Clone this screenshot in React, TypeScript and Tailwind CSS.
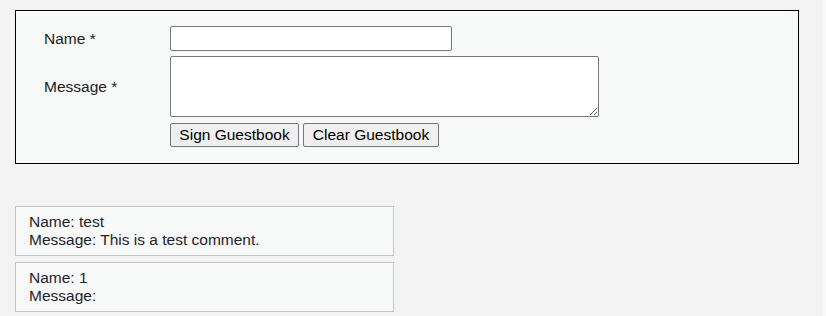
import React, { useState } from 'react';

type Entry = { name: string; message: string };

const initialEntries: Entry[] = [
  { name: 'test', message: 'This is a test comment.' },
  { name: '1', message: '' },
];

const App: React.FC = () => {
  const [name, setName] = useState('');
  const [message, setMessage] = useState('');
  const [entries, setEntries] = useState<Entry[]>(initialEntries);

  const sign = () => {
    if (!name || !message) return;
    setEntries([...entries, { name, message }]);
    setName('');
    setMessage('');
  };

  return (
    <div className="flex min-h-[316px] w-[826px] bg-[#f3f3f3] font-['Liberation_Sans',Arial,sans-serif] text-[15.5px] text-[#1f2328]">
      <div className="flex-1 pl-[15px] pt-[10px]">
        {/* Guestbook form */}
        <div className="w-[784px] border border-black bg-[#f7f8f8] pl-[28px] pt-[15px] pb-[16px]">
          <div className="grid grid-cols-[126px_auto] items-center">
            <label className="text-[15.5px] text-[#222]">Name *</label>
            <input
              value={name}
              onChange={(e) => setName(e.target.value)}
              className="h-[25px] w-[282px] rounded-[2px] border border-[#767676] bg-white px-1 outline-none"
            />
            <label className="mt-[5px] text-[15.5px] text-[#222]">Message *</label>
            <textarea
              value={message}
              onChange={(e) => setMessage(e.target.value)}
              className="mt-[5px] h-[61px] w-[429px] rounded-[2px] border border-[#767676] bg-white px-1 outline-none"
            />
            <div />
            <div className="mt-[6px] flex gap-[4px]">
              <button
                onClick={sign}
                className="h-[24px] w-[129px] rounded-[2px] border border-[#767676] bg-[#efefef] text-[15.5px] leading-none text-black"
              >
                Sign Guestbook
              </button>
              <button
                onClick={() => setEntries([])}
                className="h-[24px] w-[136px] rounded-[2px] border border-[#767676] bg-[#efefef] text-[15.5px] leading-none text-black"
              >
                Clear Guestbook
              </button>
            </div>
          </div>
        </div>

        {/* Entries */}
        <div className="mt-[42px] flex flex-col gap-[6px]">
          {entries.map((entry, i) => (
            <div
              key={i}
              className="w-[379px] border border-[#c4c4c4] bg-[#f7f8f8] pl-[13px] pt-[6px] pb-[6px] leading-[18px]"
            >
              <div>Name: {entry.name}</div>
              <div>Message: {entry.message}</div>
            </div>
          ))}
        </div>
      </div>
      <div className="w-[3px] bg-[#f9f9f9]" />
    </div>
  );
};

export default App;
